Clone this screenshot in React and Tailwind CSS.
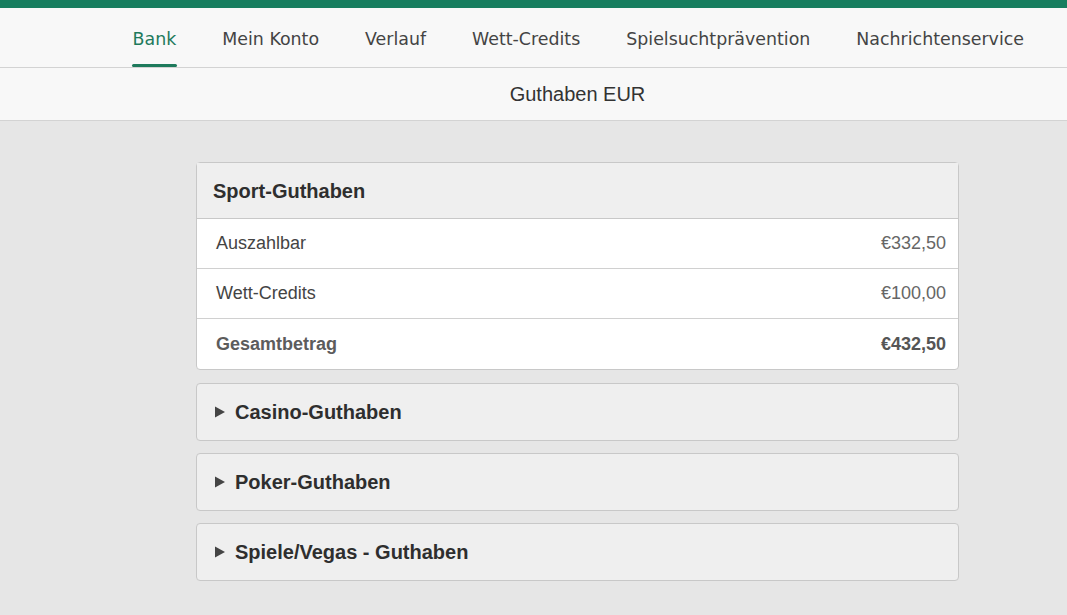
const tabs = ['Bank', 'Mein Konto', 'Verlauf', 'Wett-Credits', 'Spielsuchtprävention', 'Nachrichtenservice']

const sportRows = [
  { label: 'Auszahlbar', value: '€332,50' },
  { label: 'Wett-Credits', value: '€100,00' },
  { label: 'Gesamtbetrag', value: '€432,50', total: true },
]

const collapsed = ['Casino-Guthaben', 'Poker-Guthaben', 'Spiele/Vegas - Guthaben']

function Caret() {
  return (
    <svg width="10" height="12" viewBox="0 0 10 12" className="shrink-0">
      <path d="M0 0.5 L10 6 L0 11.5 Z" fill="#444" />
    </svg>
  )
}

export default function App() {
  return (
    <div className="min-h-[615px] bg-[#e6e6e6] font-['Liberation_Sans',Arial,sans-serif]">
      <div className="h-2 bg-[#177e5f]" />

      <nav className="flex h-[60px] items-stretch justify-end border-b border-[#d3d3d3] bg-[#f8f8f8] pr-[43px] pt-[4px] font-['DejaVu_Sans',Verdana,sans-serif] text-[17.4px]">
        {tabs.map((t, i) => (
          <div
            key={t}
            className={`relative flex items-center ${i === 0 ? '' : 'ml-[46px]'} ${i === 0 ? 'text-[#1e7a5c]' : 'text-[#444]'}`}
          >
            {t}
            {i === 0 && <span className="absolute bottom-0 left-[-1px] right-[-1px] h-[3px] rounded-sm bg-[#1e7a5c]" />}
          </div>
        ))}
      </nav>

      <div className="h-[53px] border-b border-[#d3d3d3] bg-[#f8f8f8]">
        <div className="ml-[196px] flex h-full w-[763px] items-center justify-center text-[20px] text-[#333]">
          Guthaben EUR
        </div>
      </div>

      <main className="ml-[196px] flex w-[763px] flex-col gap-[12px] pt-[41px] pb-8">
        <section className="mb-px rounded-sm border border-[#c8c8c8] bg-white">
          <div className="flex h-[56px] items-center border-b border-[#c8c8c8] bg-[#efefef] px-4 text-[20px] font-bold text-[#2e2e2e]">
            Sport-Guthaben
          </div>
          {sportRows.map((r, i) => (
            <div
              key={r.label}
              className={`flex h-[50px] items-center justify-between px-[19px] pr-3 text-[18px] ${i < sportRows.length - 1 ? 'border-b border-[#d0d0d0]' : ''} ${r.total ? 'font-bold text-[#5c5c5c]' : 'text-[#444]'}`}
            >
              <span>{r.label}</span>
              <span className={r.total ? 'text-[#555]' : 'text-[#666]'}>{r.value}</span>
            </div>
          ))}
        </section>

        {collapsed.map((c) => (
          <section
            key={c}
            className="flex h-[58px] items-center gap-[10px] rounded-sm border border-[#c8c8c8] bg-[#efefef] px-[18px] text-[20px] font-bold text-[#2e2e2e]"
          >
            <Caret />
            {c}
          </section>
        ))}
      </main>
    </div>
  )
}
